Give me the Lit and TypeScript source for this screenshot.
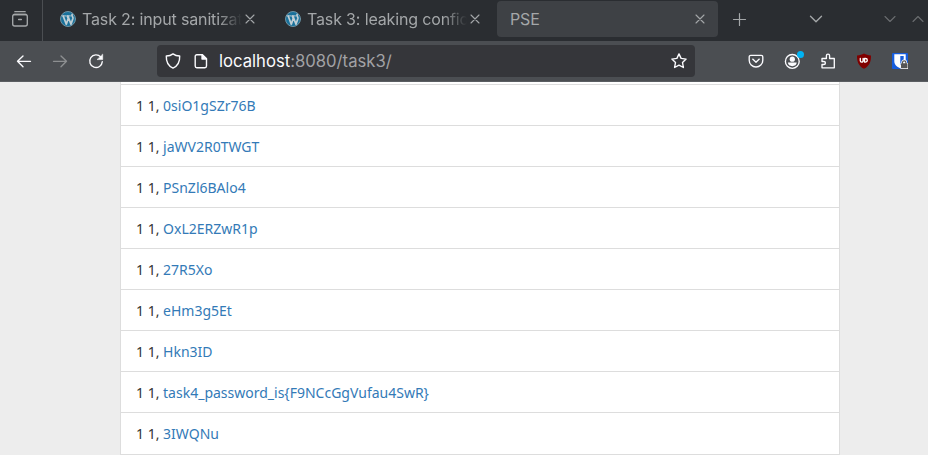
import { LitElement, html, css, svg } from "lit";
import { customElement } from "lit/decorators.js";
import { classMap } from "lit/directives/class-map.js";

const icon = (body: unknown, cls = "") =>
  html`<svg class="icon ${cls}" width="16" height="16" viewBox="0 0 16 16" fill="none" stroke="currentColor" stroke-width="1.35" stroke-linecap="round" stroke-linejoin="round">${body}</svg>`;

const icons = {
  library: svg`<path d="M2.8.7h10.4" stroke-width="1.2"/><path d="M1.8 3.500h12.4"/><rect x=".7" y="3.500" width="14.6" height="11.500" rx="2"/><path d="M6.6 8.5h2.8"/>`,
  close: svg`<path d="M4 4l8 8M12 4l-8 8" stroke-width="1.1"/>`,
  plus: svg`<path d="M8.5 2.5v12M2.5 8.500h12" stroke-width="1.2"/>`,
  down: svg`<path d="M2.5 5.2L8 10.7l5.5-5.5"/>`,
  smallDown: svg`<path d="M3 5.5l5 5 5-5" stroke-width="1.1"/>`,
  smallUp: svg`<path d="M3 10.5l5-5 5 5" stroke-width="1.1"/>`,
  back: svg`<path d="M14.5 8.3H1.6M7 2.900L1.5 8.300 7 13.700"/>`,
  forward: svg`<path d="M1.5 8.3h12.9M9 2.900L14.5 8.300 9 13.700"/>`,
  reload: svg`<path d="M12.8 4.1A6.3 6.3 0 1 0 14.3 8.6"/><path d="M14.7 1.5v5.1H9.4z" fill="currentColor" stroke-width=".6"/>`,
  shield: svg`<path d="M8 .9C6.5 2.1 3.8 3 1.3 3c-.2 5.1 1.5 9.8 6.7 12.1C13.2 12.8 14.9 8.1 14.7 3 12.2 3 9.5 2.1 8 .9z" stroke-width="1.4"/>`,
  page: svg`<path d="M3.8 1.7h5.5l4.2 4.1v7.3a1.6 1.6 0 0 1-1.6 1.6H3.8a1.6 1.6 0 0 1-1.6-1.6V3.3a1.6 1.6 0 0 1 1.6-1.6z" stroke-width="1.4"/><path d="M9 1.6v4.5h4.5z" fill="currentColor"/>`,
  star: svg`<path d="M8 .9l2.1 4.5 5 .7-3.6 3.4.9 5L8 12.1l-4.4 2.4.9-5L.9 6.1l5-.7z" stroke-width="1.4"/>`,
  pocket: svg`<path d="M2.8 2.3h10.4a1.6 1.6 0 0 1 1.6 1.6v3.3a6.8 6.8 0 0 1-13.6 0V3.9a1.6 1.6 0 0 1 1.6-1.6z"/><path d="M4.7 6.1L8 9.3l3.3-3.2"/>`,
  account: svg`<circle cx="8.3" cy="8.4" r="6.9"/><circle cx="8.3" cy="6.2" r="2.6" fill="currentColor" stroke="none"/><path d="M3.900 9.600h8.800c0 2.200-2 3.600-4.400 3.600s-4.400-1.400-4.400-3.600z" fill="currentColor" stroke="none"/>`,
  puzzle: svg`<path d="M2 5.500h4.400V2.700a1.600 1.600 0 0 1 3.200 0v2.800h4.700v9.300H2v-3.300h1.900a1.500 1.500 0 0 0 0-3H2z"/>`,
  ublock: svg`<path d="M8 .5c2.1 1.200 4 1.600 7 1.900C15 8.400 13.900 12.600 8 15.800 2.100 12.600 1 8.400 1 2.400 4 2.100 5.900 1.700 8 .5z" fill="#800000" stroke="none"/><path d="M4.300 5.500v2.200a1.400 1.400 0 0 0 2.800 0V5.500M8.500 5.500h1a1.800 1.800 0 0 1 0 3.600h-1z" stroke="#fff" stroke-width="1.350"/>`,
  vault: svg`<rect width="16" height="16" rx="1" fill="#175ddc" stroke="none"/><path d="M2.300 1.300h11.400v7c0 3.400-2.500 5.500-5.700 6.900-3.200-1.400-5.700-3.500-5.700-6.900z" fill="#fff" stroke="none"/><path d="M8.300 3h3.400v5.300c0 1.500-1.400 3-3.400 4z" fill="#175ddc" stroke="none"/><path d="M9.300 10V9.500a2.900 2.900 0 0 1 5.800 0v.5h.9v6H8.500v-6z" fill="#fff" stroke="none"/><path d="M10.500 10.500V9.600a1.700 1.700 0 0 1 3.400 0v.9" stroke="#555" stroke-width="1.200"/><rect x="9" y="10.300" width="6.500" height="5" rx=".5" fill="#555" stroke="none"/>`,
  wordpress: svg`<circle cx="8" cy="8" r="7.500" fill="#19719b" stroke="#6f94a5" stroke-width="1"/><path d="M2 4.900h3.600M6.800 4.900h3.600" stroke="#c0ced4" stroke-width="1"/><path d="M3.300 5.200l3 8.100L8.200 7.500 7.400 5.200M8 5.200l3 8.100 1.900-5.800c.5-1.800-1.600-2.300-.8-4" stroke="#c0ced4" stroke-width="1.750"/>`,
};

@customElement("app-root")
export class AppRoot extends LitElement {
  static styles = css`
    :host { display: flex; flex-direction: column; width: 928px; height: 455px; overflow: hidden; background: #ededed; }
    * { box-sizing: border-box; }
    .icon { display: block; flex: none; overflow: visible; }
    .strip { display: flex; align-items: flex-start; flex: none; height: 41px; background: #2a2d31; color: #a4a7a9; font: 16px/36px Inter, sans-serif; }
    .library { width: 43px; height: 41px; padding: 11px 0 0 12px; border-right: 1px solid #4b4e52; flex: none; }
    .tabs { display: flex; gap: 4px; padding: 1px 0 0 4px; }
    .tab { display: flex; align-items: center; width: 221px; height: 36px; padding: 0 10px 0 13px; border-radius: 4px; }
    .tab.active { background: #3e4145; }
    .title { flex: 1; min-width: 0; margin-left: 6px; overflow: hidden; white-space: nowrap; letter-spacing: -0.15px; }
    .active .title { margin-left: 0; }
    .faded { mask-image: linear-gradient(to left, transparent 0, #000 24px); }
    .actions { display: flex; flex: 1; padding: 11px 2px 0 13px; }
    .list-tabs { margin-left: 61px; }
    .win { color: #6a6d70; }
    .win-min { margin-left: auto; margin-right: 12px; }
    .toolbar { display: flex; align-items: center; flex: none; height: 41px; padding: 0 20px 1px 16px; background: #4b4e52; border-bottom: 1px solid #5b5e62; color: #fbfbfe; }
    .nav { display: flex; gap: 20px; width: 141px; }
    .disabled { color: #8d8f91; }
    .url { display: flex; align-items: center; width: 538px; height: 32px; padding: 0 8px; border-radius: 4px; background: #35363a; font: 16.67px/32px Inter, sans-serif; }
    .page { margin-left: 12px; }
    .address { flex: 1; margin-left: 10px; color: #a2a2a5; }
    .host { color: #fbfbfe; }
    .tools { display: flex; gap: 20px; margin-left: 53px; }
    .badged { position: relative; }
    .dot { position: absolute; right: -4px; top: -2px; width: 7px; height: 7px; border-radius: 50%; background: #00b3f4; }
    .content { flex: 1; overflow: hidden; font: 14px/20px "Noto Sans", sans-serif; color: #333; }
    .list { width: 720px; margin-left: 120px; padding-top: 2px; background: #fff; border: solid #ddd; border-width: 0 1px; }
    .row { height: 41px; padding: 11px 15px 10px; border-top: 1px solid #ddd; line-height: 20px; }
    .last { height: 43px; border-bottom: 1px solid #ddd; }
    .link { color: #337ab7; text-decoration: none; }
  `;

  private tabs = [
    { title: "Task 2: input sanitizat", favicon: true },
    { title: "Task 3: leaking confid", favicon: true },
    { title: "PSE", favicon: false },
  ];

  private rows = ["0siO1gSZr76B", "jaWV2R0TWGT", "PSnZl6BAlo4", "OxL2ERZwR1p", "27R5Xo", "eHm3g5Et", "Hkn3ID", "task4_password_is{F9NCcGgVufau4SwR}", "3IWQNu"];

  render() {
    return html`
      <header class="strip">
        <div class="library">${icon(icons.library)}</div>
        <nav class="tabs">
          ${this.tabs.map((t) => html`
            <div class=${classMap({ tab: true, active: !t.favicon })}>
              ${t.favicon ? icon(icons.wordpress) : ""}
              <span class=${classMap({ title: true, faded: t.favicon })}>${t.title}</span>
              ${icon(icons.close)}
            </div>`)}
        </nav>
        <div class="actions">
          ${icon(icons.plus)}${icon(icons.down, "list-tabs")}
          ${icon(icons.smallDown, "win win-min")}${icon(icons.smallUp, "win")}
        </div>
      </header>
      <div class="toolbar">
        <div class="nav">${icon(icons.back)}${icon(icons.forward, "disabled")}${icon(icons.reload)}</div>
        <div class="url">
          ${icon(icons.shield)}${icon(icons.page, "page")}
          <span class="address"><span class="host">localhost</span>:8080/task3/</span>
          ${icon(icons.star)}
        </div>
        <div class="tools">
          ${icon(icons.pocket)}
          <div class="badged">${icon(icons.account)}<span class="dot"></span></div>
          ${icon(icons.puzzle)}${icon(icons.ublock)}${icon(icons.vault)}
        </div>
      </div>
      <main class="content">
        <div class="list">
          ${this.rows.map((r, i) => html`<div class=${classMap({ row: true, last: i === this.rows.length - 1 })}>1 1, <a class="link">${r}</a></div>`)}
        </div>
      </main>`;
  }
}
